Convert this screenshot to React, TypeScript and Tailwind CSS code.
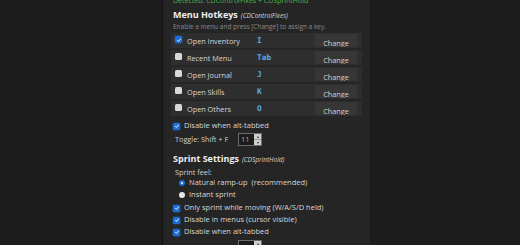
import React from "react";

const font = { fontFamily: "'Open Sans', 'Noto Sans', sans-serif" };

function Check({ on }: { on?: boolean }) {
  if (on) {
    return (
      <span className="flex h-[7px] w-[7px] shrink-0 items-center justify-center rounded-[1.5px] bg-[#1b6fd6] shadow-[0_0_2px_#1b6fd6]">
        <svg viewBox="0 0 10 10" className="h-[6px] w-[6px]">
          <path d="M2 5.2 L4.2 7.2 L8 2.8" fill="none" stroke="#fff" strokeWidth="1.6" />
        </svg>
      </span>
    );
  }
  return <span className="block h-[7px] w-[7px] shrink-0 rounded-[1.5px] bg-[#d9d9d9]" />;
}

function Radio({ on }: { on?: boolean }) {
  if (on) {
    return (
      <span className="flex h-[6px] w-[6px] shrink-0 items-center justify-center rounded-full bg-[#1b6fd6]">
        <span className="block h-[2px] w-[2px] rounded-full bg-white" />
      </span>
    );
  }
  return <span className="block h-[6px] w-[6px] shrink-0 rounded-full bg-[#e6e6e6]" />;
}

function Spin({ value }: { value: string }) {
  return (
    <div className="flex h-[13px] w-[24px] border border-[#6c6c6c] bg-[#1c1c1c]">
      <span className="flex-1 pl-[2px] text-[7.5px] leading-[11px] text-[#a8a8a8]">{value}</span>
      <div className="flex w-[7px] flex-col bg-[#cfcfcf]">
        <span className="flex flex-1 items-center justify-center border-b border-[#9a9a9a]">
          <span className="block h-0 w-0 border-x-[1.5px] border-b-[2px] border-x-transparent border-b-[#333]" />
        </span>
        <span className="flex flex-1 items-center justify-center">
          <span className="block h-0 w-0 border-x-[1.5px] border-t-[2px] border-x-transparent border-t-[#333]" />
        </span>
      </div>
    </div>
  );
}

const hotkeys = [
  { label: "Open Inventory", key: "I", on: true },
  { label: "Recent Menu", key: "Tab" },
  { label: "Open Journal", key: "J" },
  { label: "Open Skills", key: "K" },
  { label: "Open Others", key: "O" },
];

export default function App() {
  return (
    <div className="h-[245px] w-[520px] overflow-hidden bg-[#1d1d1d] pl-[162px]" style={font}>
      <div className="flex h-full w-[208px] flex-col border-l border-[#111] bg-[#252525] pl-[8px] pr-[8px]">
        <div className="mt-[-4px] ml-[2px] h-[9px] whitespace-nowrap text-[7px] leading-[9px] text-[#47b347]">
          Detected: CDControlFixes + CDSprintHold
        </div>

        <div className="mt-[4px] ml-[2px] flex h-[12px] items-baseline gap-[3px] whitespace-nowrap">
          <span className="text-[9px] font-bold leading-[12px] text-[#efefef]">Menu Hotkeys</span>
          <span className="text-[6.5px] italic text-[#d4d4d4]">(CDControlFixes)</span>
        </div>
        <div className="mt-[1px] ml-[2px] h-[9px] whitespace-nowrap text-[6.5px] leading-[9px] text-[#8a8a8a]">
          Enable a menu and press [Change] to assign a key.
        </div>

        <div className="mt-[2px] flex flex-col gap-[2px]">
          {hotkeys.map((h) => (
            <div key={h.label} className="flex h-[15px] bg-[#2e2e2e]">
              <div className="ml-[4px] mt-[3px]">
                <Check on={h.on} />
              </div>
              <span className="ml-[5px] w-[70px] whitespace-nowrap pt-[3px] text-[7.3px] leading-[11px] text-[#d6d6d6]">
                {h.label}
              </span>
              <span
                className="w-[58px] pt-[2px] text-[7.8px] font-bold leading-[11px] text-[#5ba8e8]"
                style={{ fontFamily: "'DejaVu Sans Mono', monospace" }}
              >
                {h.key}
              </span>
              <div className="mt-[1px] flex h-[13px] w-[42px] items-start justify-center overflow-hidden bg-[#363636]">
                <span className="pt-[4px] text-[7.3px] leading-[10px] text-[#d0d0d0]">Change</span>
              </div>
            </div>
          ))}
        </div>

        <div className="mt-[5px] ml-[2px] flex h-[10px] items-center gap-[4px]">
          <Check on />
          <span className="text-[7.5px] text-[#d6d6d6]">Disable when alt-tabbed</span>
        </div>
        <div className="mt-[2px] ml-[4px] flex h-[13px] items-center">
          <span className="w-[63px] whitespace-nowrap text-[7.3px] text-[#cfcfcf]">Toggle: Shift + F</span>
          <Spin value="11" />
        </div>

        <div className="mt-[3px] h-[2px] bg-[#5a5a5a]" />

        <div className="mt-[4px] ml-[2px] flex h-[12px] items-baseline gap-[3px] whitespace-nowrap">
          <span className="text-[9px] font-bold leading-[12px] text-[#efefef]">Sprint Settings</span>
          <span className="text-[6.5px] italic text-[#d4d4d4]">(CDSprintHold)</span>
        </div>
        <div className="mt-[3px] ml-[4px] h-[9px] text-[7.3px] leading-[9px] text-[#cfcfcf]">Sprint feel:</div>
        <div className="mt-[1px] ml-[8px] flex h-[10px] items-center gap-[4px]">
          <Radio on />
          <span className="whitespace-pre text-[7.5px] text-[#d6d6d6]">Natural ramp-up  (recommended)</span>
        </div>
        <div className="mt-[2px] ml-[8px] flex h-[10px] items-center gap-[4px]">
          <Radio />
          <span className="text-[7.5px] text-[#d6d6d6]">Instant sprint</span>
        </div>

        {["Only sprint while moving (W/A/S/D held)", "Disable in menus (cursor visible)", "Disable when alt-tabbed"].map(
          (t, i) => (
            <div key={t} className={`${i === 0 ? "mt-[3px]" : "mt-[2px]"} ml-[2px] flex h-[10px] items-center gap-[4px]`}>
              <Check on />
              <span className="whitespace-nowrap text-[7.5px] text-[#d6d6d6]">{t}</span>
            </div>
          )
        )}

        <div className="mt-[3px] ml-[67px]">
          <Spin value="" />
        </div>
      </div>
    </div>
  );
}
